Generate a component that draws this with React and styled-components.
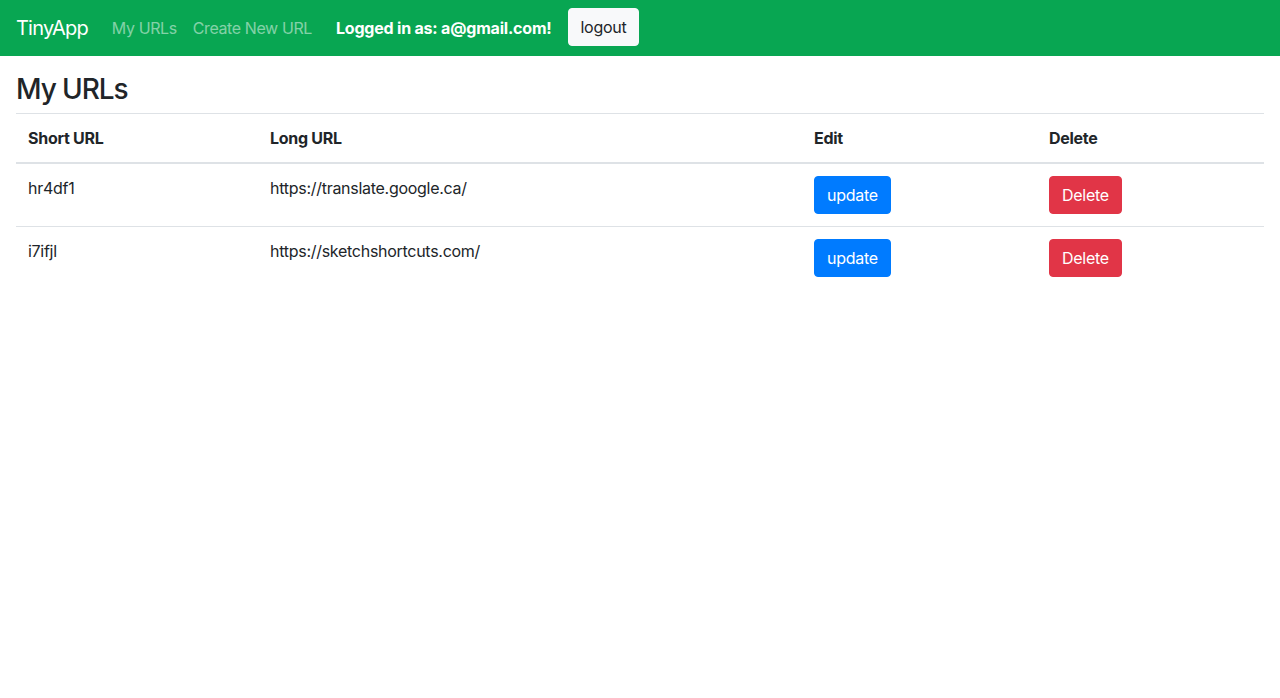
import React from "react";
import styled, { createGlobalStyle } from "styled-components";

const Global = createGlobalStyle`
  html, body { margin: 0; padding: 0; background: #fff; }
  body {
    font-family: Inter, "Noto Sans", "Liberation Sans", sans-serif;
    font-size: 16px;
    line-height: 1.5;
    color: #212529;
    letter-spacing: -0.28px;
  }
  * { box-sizing: border-box; }
`;

const Navbar = styled.nav`
  height: 56px;
  background: #08a652;
  display: flex;
  align-items: center;
  padding: 8px 16px 10px;
`;

const Brand = styled.a`
  font-size: 20px;
  line-height: 30px;
  letter-spacing: -0.8px;
  color: #fff;
  margin: 2px 16px 0 0;
  text-decoration: none;
`;

const NavLink = styled.a`
  padding: 8px;
  margin-top: 2px;
  color: rgba(255, 255, 255, 0.5);
  text-decoration: none;
  line-height: 24px;
  letter-spacing: -0.4px;
`;

const UserText = styled.span`
  margin: 2px 0 0 16px;
  color: #fff;
  font-weight: 700;
  letter-spacing: -0.2px;
`;

const LightButton = styled.button`
  margin-left: 16px;
  height: 38px;
  padding: 6px 12px;
  font: inherit;
  letter-spacing: inherit;
  color: #212529;
  background: #f8f9fa;
  border: 1px solid #f8f9fa;
  border-radius: 4px;
`;

const Main = styled.main`
  padding: 0 16px;
`;

const Title = styled.h3`
  margin: 17px 0 6px;
  font-size: 28px;
  font-weight: 500;
  line-height: 1.2;
  letter-spacing: -1.1px;
`;

const Table = styled.table`
  width: 100%;
  border-collapse: collapse;
  table-layout: fixed;
`;

const Th = styled.th`
  text-align: left;
  font-weight: 700;
  padding: 12px;
  border-top: 1px solid #dee2e6;
  border-bottom: 2px solid #dee2e6;
  vertical-align: bottom;
  width: ${(p) => p.$w}px;
`;

const Td = styled.td`
  padding: 12px;
  vertical-align: top;
  border-top: ${(p) => (p.$first ? "none" : "1px solid #dee2e6")};
`;

const ActionButton = styled.button`
  height: 38px;
  padding: 6px 12px;
  font: inherit;
  letter-spacing: inherit;
  color: #fff;
  background: ${(p) => p.$bg};
  border: 1px solid ${(p) => p.$bg};
  border-radius: 4px;
`;

const rows = [
  { short: "hr4df1", long: "https://translate.google.ca/" },
  { short: "i7ifjl", long: "https://sketchshortcuts.com/" },
];

export default function App() {
  return (
    <>
      <Global />
      <Navbar>
        <Brand href="#">TinyApp</Brand>
        <NavLink href="#">My URLs</NavLink>
        <NavLink href="#">Create New URL</NavLink>
        <UserText>Logged in as: a@gmail.com!</UserText>
        <LightButton>logout</LightButton>
      </Navbar>
      <Main>
        <Title>My URLs</Title>
        <Table>
          <thead>
            <tr>
              <Th $w={242}>Short URL</Th>
              <Th $w={544}>Long URL</Th>
              <Th $w={235}>Edit</Th>
              <Th $w={227}>Delete</Th>
            </tr>
          </thead>
          <tbody>
            {rows.map((r, i) => (
              <tr key={r.short}>
                <Td $first={i === 0}>{r.short}</Td>
                <Td $first={i === 0}>{r.long}</Td>
                <Td $first={i === 0}>
                  <ActionButton $bg="#007bff">update</ActionButton>
                </Td>
                <Td $first={i === 0}>
                  <ActionButton $bg="#e13547">Delete</ActionButton>
                </Td>
              </tr>
            ))}
          </tbody>
        </Table>
      </Main>
    </>
  );
}
